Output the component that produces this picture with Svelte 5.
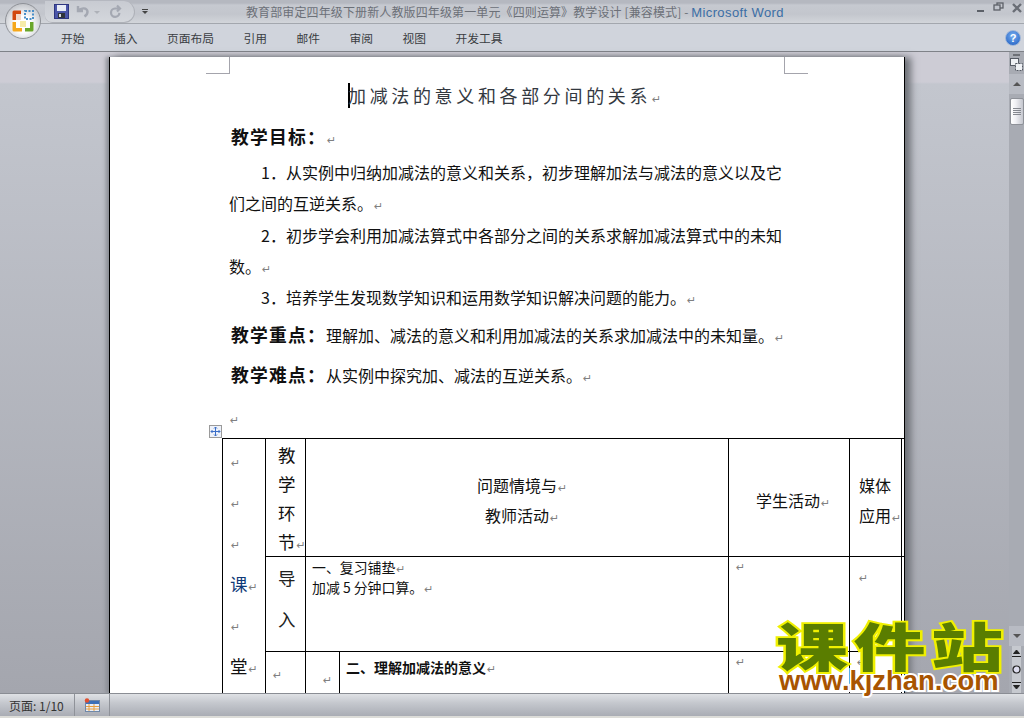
<script>
  const tabs = ["开始", "插入", "页面布局", "引用", "邮件", "审阅", "视图", "开发工具"];
  const objectives = [
    { first: "1．从实例中归纳加减法的意义和关系，初步理解加法与减法的意义以及它", rest: "们之间的互逆关系。" },
    { first: "2．初步学会利用加减法算式中各部分之间的关系求解加减法算式中的未知", rest: "数。" },
    { first: "3．培养学生发现数学知识和运用数学知识解决问题的能力。", rest: "" }
  ];
</script>

<div class="word">
  <header class="ribbon">
    <div class="office-btn">
      <svg width="24" height="24" viewBox="0 0 24 24">
        <path d="M1.5 3a1.5 1.5 0 0 1 1.5-1.5h7V5H5v6H1.5Z" fill="#d2470f"/>
        <rect x="5" y="5" width="5" height="6" fill="#f4d8c8"/>
        <rect x="14" y="2" width="8" height="8" fill="none" stroke="#4a8fc8" stroke-width="2" stroke-dasharray="2 1.5"/>
        <path d="M1.5 13H5v6h6v3.5H3A1.5 1.5 0 0 1 1.5 21Z" fill="#f5a81c"/>
        <path d="M22.5 13v8a1.5 1.5 0 0 1-1.5 1.5h-7V19h5v-6Z" fill="#6aa62a"/>
        <rect x="9" y="12" width="6" height="6" fill="#f0e070" opacity=".6"/>
      </svg>
    </div>
    <div class="titlebar">
      <div class="qat">
        <svg width="15" height="15" viewBox="0 0 15 15">
          <rect x="0.5" y="0.5" width="14" height="14" fill="#4a55a8" stroke="#2e3680"/>
          <rect x="3" y="1" width="9" height="6" fill="#e8ecf6"/>
          <rect x="4" y="9" width="7" height="5" fill="#30343c"/>
          <rect x="5" y="10" width="2" height="3" fill="#d8dce4"/>
        </svg>
        <svg class="undo" width="14" height="14" viewBox="0 0 14 14">
          <path d="M2 2v5h5M2.5 6.5C5 3.5 11 3.5 11.5 7.5c.2 2-1 3.5-3 5" fill="none" stroke="#a4a8b2" stroke-width="2.4"/>
        </svg>
        <span class="drop"></span>
        <svg class="redo" width="14" height="14" viewBox="0 0 14 14">
          <path d="M9 1.5l3 3-3 3M11 4.5H7a4.2 4.2 0 1 0 4.4 4.4" fill="none" stroke="#a4a8b2" stroke-width="2.2"/>
        </svg>
      </div>
      <div class="qat-more"><i></i><b></b></div>
      <div class="doc-title">教育部审定四年级下册新人教版四年级第一单元《四则运算》教学设计 [兼容模式] - <span>Microsoft Word</span></div>
      <div class="win-btns">
        <svg width="48" height="16" viewBox="0 0 48 16">
          <rect x="2" y="10" width="7" height="2" fill="#5c6068"/>
          <rect x="22" y="3" width="6" height="5" fill="none" stroke="#5c6068" stroke-width="1.3"/>
          <rect x="19" y="5" width="6" height="5" fill="#c0c4cc" stroke="#5c6068" stroke-width="1.3"/>
          <path d="M38 4l8 8M46 4l-8 8" stroke="#6a6e76" stroke-width="2.4"/>
        </svg>
      </div>
    </div>
    <nav class="tabs">
      {#each tabs as tab}
        <span class="tab">{tab}</span>
      {/each}
      <span class="help">?</span>
    </nav>
  </header>

  <main class="workspace">
    <div class="desk">
      <article class="page">
        <i class="corner left"></i>
        <i class="corner right"></i>

        <h1><span class="caret"></span>加减法的意义和各部分间的关系<em>↵</em></h1>
        <h2>教学目标：<em>↵</em></h2>
        {#each objectives as o}
          <p class="first">{o.first}{#if !o.rest}<em>↵</em>{/if}</p>
          {#if o.rest}
            <p class="rest">{o.rest}<em>↵</em></p>
          {/if}
        {/each}
        <p class="key"><b>教学重点：</b>理解加、减法的意义和利用加减法的关系求加减法中的未知量。<em>↵</em></p>
        <p class="key hard"><b>教学难点：</b>从实例中探究加、减法的互逆关系。<em>↵</em></p>
        <p class="blank"><em>↵</em></p>

        <div class="table-wrap">
          <span class="handle">
            <svg width="11" height="11" viewBox="0 0 11 11">
              <path d="M5.5 1v9M1 5.5h9M4 2.5l1.5-1.5L7 2.5M4 8.5L5.5 10 7 8.5M2.5 4L1 5.5 2.5 7M8.5 4L10 5.5 8.5 7" fill="none" stroke="#3a6ec8" stroke-width="1"/>
            </svg>
          </span>
          <table>
            <colgroup>
              <col style="width:43px" /><col style="width:40px" /><col style="width:34px" />
              <col style="width:389px" /><col style="width:121px" /><col style="width:52px" /><col style="width:30px" />
            </colgroup>
            <tbody>
              <tr class="r1">
                <td rowspan="3" class="lesson">
                  <div><em>↵</em></div>
                  <div><em>↵</em></div>
                  <div><em>↵</em></div>
                  <div class="big blue">课<em>↵</em></div>
                  <div><em>↵</em></div>
                  <div class="big">堂<em>↵</em></div>
                </td>
                <td class="stage">教<br />学<br />环<br />节<em>↵</em></td>
                <td colspan="2" class="center lead">问题情境与<em>↵</em><br />教师活动<em>↵</em></td>
                <td class="center shift">学生活动<em>↵</em></td>
                <td class="media">媒体<br />应用<em>↵</em></td>
                <td></td>
              </tr>
              <tr class="r2">
                <td class="stage intro">导<br />入</td>
                <td colspan="2" class="text">一、复习铺垫<em>↵</em><br />加减 5 分钟口算。<em>↵</em></td>
                <td class="top"><em>↵</em></td>
                <td class="top drop-mark"><em>↵</em></td>
                <td></td>
              </tr>
              <tr class="r3">
                <td class="top low"><em>↵</em></td>
                <td class="top lower"><em>↵</em></td>
                <td class="text heading"><b>二、理解加减法的意义</b><em>↵</em></td>
                <td class="top"><em>↵</em></td>
                <td class="top"><em>↵</em></td>
                <td></td>
              </tr>
            </tbody>
          </table>
        </div>
      </article>
    </div>

    <aside class="scrollbar">
      <i class="split"></i>
      <svg class="ruler" width="13" height="13" viewBox="0 0 13 13">
        <rect x="0.5" y="0.5" width="8" height="7" fill="#eef0f4" stroke="#555a64"/>
        <rect x="5.5" y="5.5" width="7" height="7" fill="#eef0f4" stroke="#555a64" stroke-dasharray="2 1"/>
      </svg>
      <div class="arrow up"></div>
      <div class="thumb"><i></i><i></i><i></i><i></i></div>
      <div class="track"></div>
      <div class="arrow down"></div>
      <div class="nav">
        <svg width="9" height="8" viewBox="0 0 9 8"><path d="M4.5 0L7.5 3.5H1.5ZM0 6.5h9" fill="#222" stroke="#222"/></svg>
        <svg width="9" height="9" viewBox="0 0 9 9"><circle cx="4.5" cy="4.5" r="3.5" fill="#dde" stroke="#222" stroke-width="1.2"/></svg>
        <svg width="9" height="8" viewBox="0 0 9 8"><path d="M0 1.5h9M4.5 8L1.5 4.5H7.5Z" fill="#222" stroke="#222"/></svg>
      </div>
    </aside>

    <div class="watermark">
      <div class="wm-cn">课件站</div>
      <div class="wm-url">www.kjzhan.com</div>
    </div>
  </main>

  <footer class="status">
    <span class="cell pages">页面: 1/10</span>
    <span class="cell proof">
      <svg width="16" height="14" viewBox="0 0 16 14">
        <rect x="1.5" y="2.5" width="14" height="11" fill="#e8eef8" stroke="#7088a8"/>
        <rect x="2" y="3" width="13" height="3" fill="#3c70b8"/>
        <path d="M5 6v7M10 6v7M2 8.5h13M2 11h13" stroke="#e8a040"/>
        <circle cx="3" cy="2.5" r="2.2" fill="#e05030"/>
      </svg>
    </span>
  </footer>
</div>

<style>
  :global(body) {
    margin: 0;
    background: #c8ccd4;
  }

  .word {
    width: 1024px;
    height: 718px;
    display: flex;
    flex-direction: column;
    overflow: hidden;
    font-family: "Noto Sans CJK SC", "Liberation Sans", sans-serif;
    color: #111;
    position: relative;
  }

  em {
    font-family: "DejaVu Sans", sans-serif;
    font-style: normal;
    font-weight: normal;
    font-size: 11px;
    line-height: 0;
    color: #808080;
    letter-spacing: 0;
    margin-left: 1px;
  }

  /* ribbon */
  .ribbon {
    height: 52px;
    flex: none;
    position: relative;
    border-bottom: 1px solid #7f8288;
    box-sizing: border-box;
  }

  .titlebar {
    height: 24px;
    display: flex;
    align-items: center;
    box-sizing: border-box;
    border-bottom: 1px solid #a3a7ae;
    background: linear-gradient(#b5b8c0 0, #b5b8c0 3px, #c6c9d0 5px, #c3c6cd 14px, #d2d5da 23px);
  }

  .office-btn {
    position: absolute;
    left: 5px;
    top: 3px;
    width: 36px;
    height: 36px;
    border-radius: 50%;
    z-index: 2;
    display: flex;
    align-items: center;
    justify-content: center;
    background: radial-gradient(circle at 50% 60%, #fff 30%, #d8dade 60%, #a8aab0 100%);
    border: 1px solid #8f9298;
    box-sizing: border-box;
  }

  .qat {
    margin-left: 45px;
    width: 90px;
    height: 22px;
    box-sizing: border-box;
    padding-left: 9px;
    display: flex;
    align-items: center;
    border: 1px solid #aeb1b8;
    border-left: none;
    border-top: none;
    border-radius: 0 12px 12px 8px;
    background: linear-gradient(#c8cbd2, #d4d7dc);
  }

  .undo {
    margin-left: 7px;
  }

  .drop {
    width: 0;
    height: 0;
    margin: 2px 0 0 4px;
    border: 3px solid transparent;
    border-top: 3px solid #aeb1b8;
    border-bottom: none;
  }

  .redo {
    margin-left: 8px;
  }

  .qat-more {
    margin-left: 6px;
    width: 7px;
    display: flex;
    flex-direction: column;
    align-items: center;
    gap: 1px;
  }

  .qat-more i {
    width: 6px;
    height: 1px;
    background: #444;
  }

  .qat-more b {
    width: 0;
    height: 0;
    border: 3px solid transparent;
    border-top: 3px solid #444;
    border-bottom: none;
  }

  .doc-title {
    margin-left: 98px;
    font-size: 12px;
    color: #6c7078;
    white-space: nowrap;
    letter-spacing: 0.01em;
  }

  .doc-title span {
    font-family: "Liberation Sans", sans-serif;
    color: #3b6ea5;
    font-size: 13px;
    letter-spacing: 0.03em;
  }

  .win-btns {
    margin-left: auto;
    margin-top: -8px;
    margin-right: 1px;
    display: flex;
  }

  .tabs {
    height: 27px;
    display: flex;
    align-items: center;
    padding: 1px 0 0 61px;
    box-sizing: border-box;
    gap: 29.5px;
    background: #d0d4dc;
  }

  .tab {
    font-size: 11.75px;
    color: #3a3d42;
    line-height: 26px;
  }

  .help {
    margin-left: auto;
    margin-right: 3px;
    width: 14px;
    height: 14px;
    border-radius: 50%;
    background: radial-gradient(circle at 50% 35%, #7ab0f0, #1a5ac0);
    border: 1px solid #9fb6d8;
    color: #fff;
    font: bold 11px/14px "Liberation Sans", sans-serif;
    text-align: center;
  }

  /* document area */
  .workspace {
    flex: 1;
    min-height: 0;
    display: flex;
    position: relative;
  }

  .desk {
    flex: 1;
    min-width: 0;
    padding: 5px 0 0 109px;
    background: linear-gradient(#cdccd5 0, #cdccd5 30px, #c3c6ce 32px, #a4a6ae 100%);
  }

  .page {
    width: 794px;
    height: 636px;
    box-sizing: content-box;
    background: #fff;
    border-left: 1px solid #000;
    border-right: 1px solid #000;
    box-shadow: 6px 0 7px #6f7278, -3px 0 4px #8a8d94;
    position: relative;
    overflow: hidden;
    padding-top: 1px;
  }

  .corner {
    position: absolute;
    top: 0;
    width: 23px;
    height: 16px;
    border-bottom: 1px solid #a4a4ac;
  }

  .corner.left {
    left: 96px;
    border-right: 1px solid #a4a4ac;
  }

  .corner.right {
    left: 674px;
    border-left: 1px solid #a4a4ac;
  }

  h1 {
    margin: 0;
    padding: 25px 0 0 238px;
    font-size: 18px;
    font-weight: normal;
    letter-spacing: 3.65px;
    line-height: 25px;
    color: #33383f;
    white-space: nowrap;
  }

  .caret {
    display: inline-block;
    width: 2px;
    height: 25px;
    margin-right: -2px;
    background: #000;
    vertical-align: top;
  }

  h2 {
    margin: 0;
    padding: 16px 0 0 121px;
    font-size: 17.8px;
    letter-spacing: 1.2px;
    font-weight: bold;
    line-height: 25px;
  }

  p {
    margin: 0;
    font-size: 16px;
    white-space: nowrap;
    line-height: 31.25px;
  }

  .first {
    padding-left: 151px;
    margin-top: 8px;
  }

  .rest {
    padding-left: 119px;
  }

  .first + .first,
  .rest + .first {
    margin-top: 0;
  }

  .key {
    padding-left: 121px;
    margin-top: 6px;
  }

  .key.hard {
    margin-top: 7px;
  }

  .key b {
    font-size: 17.8px;
    letter-spacing: 1.2px;
  }

  .blank {
    padding-left: 119px;
    margin-top: 11px;
  }

  /* table */
  .table-wrap {
    position: relative;
    margin: 5px 0 0 112px;
  }

  .handle {
    position: absolute;
    left: -13px;
    top: -13px;
    width: 11px;
    height: 11px;
    border: 1px solid #9a9a9a;
    background: #eef2fa;
    display: flex;
  }

  table {
    table-layout: fixed;
    border-collapse: collapse;
    width: 709px;
    font-size: 16px;
  }

  td {
    border: 1px solid #000;
    padding: 0;
    vertical-align: middle;
  }

  td:last-child {
    border-left: 1px solid #000;
    border-right: none;
  }

  .r1 {
    height: 118px;
  }

  .r2 {
    height: 95px;
  }

  .r3 {
    height: 60px;
  }

  .lesson {
    vertical-align: top;
    padding: 1px 0 0 7px;
    line-height: 41px;
  }

  .lesson .big {
    font-size: 17.5px;
  }

  .lesson .blue {
    color: #103a78;
  }

  .stage {
    padding: 1px 0 0 12px;
    font-size: 17.5px;
    line-height: 29px;
    white-space: nowrap;
  }

  .intro {
    padding: 0 0 12px 12px;
    line-height: 41px;
    color: #222;
  }

  .center {
    padding-top: 4px;
    text-align: center;
    line-height: 30px;
  }

  .lead {
    padding-left: 10px;
  }

  .shift {
    padding-left: 8px;
  }

  .media {
    padding: 4px 0 0 9px;
    line-height: 30px;
    white-space: nowrap;
  }

  .text {
    vertical-align: top;
    padding-left: 6px;
    font-size: 13.9px;
    line-height: 20px;
    white-space: nowrap;
  }

  .text.heading {
    padding-top: 5px;
  }

  .text b {
    font-size: 14px;
  }

  .top {
    vertical-align: top;
    padding: 1px 0 0 6px;
    line-height: 12px;
  }

  .drop-mark {
    padding-top: 12px;
    padding-left: 8px;
  }

  .low {
    padding-top: 14px;
    padding-left: 6px;
  }

  .lower {
    padding-top: 19px;
    padding-left: 16px;
  }

  /* scrollbar */
  .scrollbar {
    width: 15px;
    flex: none;
    display: flex;
    flex-direction: column;
    align-items: center;
    background: #a8abb3;
  }

  .split {
    width: 7px;
    height: 2px;
    margin: 2px 0 2px;
    background: #6d7077;
  }

  .ruler {
    margin-bottom: 3px;
  }

  .arrow {
    width: 15px;
    height: 20px;
    flex: none;
    box-sizing: border-box;
    display: flex;
    align-items: center;
    justify-content: center;
    background: #b8bbc3;
  }

  .arrow::after {
    content: "";
    border: 4px solid transparent;
    border-top: none;
    border-bottom: 4px solid #555;
  }

  .arrow.down::after {
    border-bottom: none;
    border-top: 4px solid #555;
  }

  .thumb {
    width: 14px;
    height: 27px;
    flex: none;
    box-sizing: border-box;
    margin-top: 4px;
    background: linear-gradient(90deg, #fff, #f0f0f4 40%, #c4c6ce);
    border: 1px solid #8e9198;
    border-radius: 2px;
    display: flex;
    flex-direction: column;
    align-items: center;
    justify-content: center;
    gap: 1px;
  }

  .thumb i {
    width: 8px;
    height: 1px;
    background: #85888f;
  }

  .track {
    flex: 1;
    background: linear-gradient(#c2c5cc, #a6a9b1);
  }

  .nav {
    height: 47px;
    flex: none;
    display: flex;
    flex-direction: column;
    align-items: center;
    justify-content: space-around;
    background: #c6c9cf;
  }

  /* site stamp laid over the window */
  .watermark {
    position: absolute;
    z-index: 3;
    left: 775px;
    top: 568px;
    width: 228px;
    pointer-events: none;
  }

  .wm-cn {
    height: 50px;
    font-size: 72px;
    font-weight: 900;
    line-height: 50px;
    letter-spacing: 5.5px;
    padding-left: 1px;
    color: #5a7d00;
    -webkit-text-stroke: 5px #f0f000;
    paint-order: stroke fill;
    white-space: nowrap;
    transform: scaleY(0.72);
  }

  .wm-url {
    font-family: "Liberation Sans", sans-serif;
    font-size: 27.4px;
    font-weight: bold;
    line-height: 22px;
    padding-left: 4px;
    color: #a85400;
    -webkit-text-stroke: 4px #fff;
    paint-order: stroke fill;
    white-space: nowrap;
  }

  /* status bar */
  .status {
    height: 25px;
    flex: none;
    display: flex;
    position: relative;
    box-sizing: border-box;
    border-top: 1px solid #8a8d94;
    border-bottom: 2px solid #dcdcd8;
    background: linear-gradient(#dfe1e5, #c5c8ce 40%, #a9acb4);
  }

  .cell {
    display: flex;
    align-items: center;
    box-sizing: border-box;
    border-right: 1px solid #8f9299;
  }

  .pages {
    width: 75px;
    padding-left: 9px;
    font-size: 12px;
    color: #333;
  }

  .proof {
    width: 35px;
    padding-left: 9px;
  }
</style>
